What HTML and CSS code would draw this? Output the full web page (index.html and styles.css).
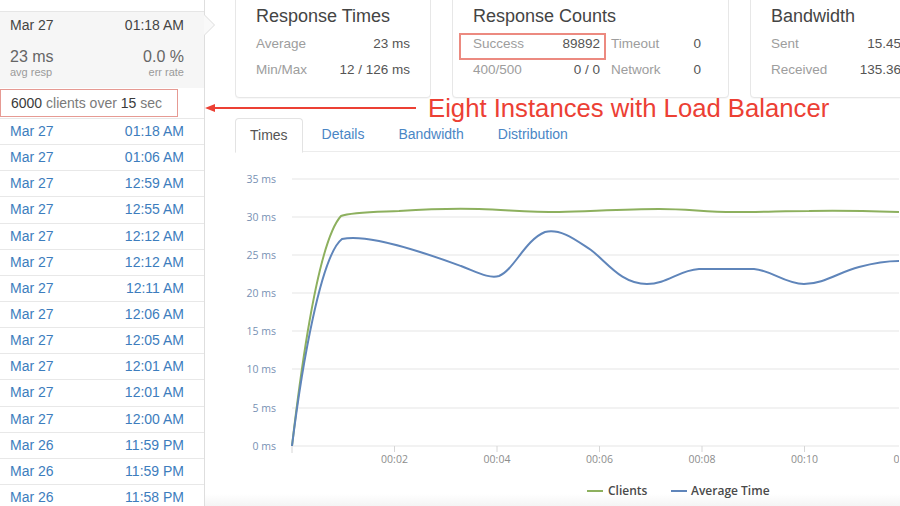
FILE: index.html
```html
<!DOCTYPE html>
<html>
<head>
<meta charset="utf-8">
<link rel="stylesheet" href="styles.css">
</head>
<body>
<div class="app">
  <aside class="sidebar">
    <div class="top-strip"></div>
    <div class="selected">
      <div class="row-line"><span>Mar 27</span><span>01:18 AM</span></div>
      <div class="stats">
        <div class="stat"><div class="big">23 ms</div><div class="small">avg resp</div></div>
        <div class="stat right"><div class="big">0.0 %</div><div class="small">err rate</div></div>
      </div>
    </div>
    <div class="clients"><b>6000</b> clients over <b>15</b> sec</div>
    <ul class="runs">
      <li><span>Mar 27</span><span>01:18 AM</span></li>
      <li><span>Mar 27</span><span>01:06 AM</span></li>
      <li><span>Mar 27</span><span>12:59 AM</span></li>
      <li><span>Mar 27</span><span>12:55 AM</span></li>
      <li><span>Mar 27</span><span>12:12 AM</span></li>
      <li><span>Mar 27</span><span>12:12 AM</span></li>
      <li><span>Mar 27</span><span>12:11 AM</span></li>
      <li><span>Mar 27</span><span>12:06 AM</span></li>
      <li><span>Mar 27</span><span>12:05 AM</span></li>
      <li><span>Mar 27</span><span>12:01 AM</span></li>
      <li><span>Mar 27</span><span>12:01 AM</span></li>
      <li><span>Mar 27</span><span>12:00 AM</span></li>
      <li><span>Mar 26</span><span>11:59 PM</span></li>
      <li><span>Mar 26</span><span>11:59 PM</span></li>
      <li><span>Mar 26</span><span>11:58 PM</span></li>
    </ul>
  </aside>

  <main class="main">
    <div class="cards">
      <section class="card card-times">
        <h2>Response Times</h2>
        <div class="kv"><span class="k">Average</span><span class="v">23 ms</span></div>
        <div class="kv"><span class="k">Min/Max</span><span class="v">12 / 126 ms</span></div>
      </section>
      <section class="card card-counts">
        <h2>Response Counts</h2>
        <div class="grid2">
          <div class="kv"><span class="k">Success</span><span class="v">89892</span></div>
          <div class="kv"><span class="k">Timeout</span><span class="v">0</span></div>
          <div class="kv"><span class="k">400/500</span><span class="v">0 / 0</span></div>
          <div class="kv"><span class="k">Network</span><span class="v">0</span></div>
        </div>
        <div class="mark-box"></div>
      </section>
      <section class="card card-bw">
        <h2>Bandwidth</h2>
        <div class="kv"><span class="k">Sent</span><span class="v">15.45 MB</span></div>
        <div class="kv"><span class="k">Received</span><span class="v">135.36 MB</span></div>
      </section>
    </div>

    <nav class="tabs">
      <span class="tab active">Times</span>
      <span class="tab">Details</span>
      <span class="tab">Bandwidth</span>
      <span class="tab">Distribution</span>
    </nav>

    <div class="chart">
      <svg class="chart-svg" width="694" height="354" viewBox="206 152 694 354">
        <g class="grid">
          <line x1="293" y1="179" x2="900" y2="179"/>
          <line x1="293" y1="217" x2="900" y2="217"/>
          <line x1="293" y1="255" x2="900" y2="255"/>
          <line x1="293" y1="293" x2="900" y2="293"/>
          <line x1="293" y1="331" x2="900" y2="331"/>
          <line x1="293" y1="369" x2="900" y2="369"/>
          <line x1="293" y1="408" x2="900" y2="408"/>
          <line x1="293" y1="446" x2="900" y2="446"/>
        </g>
        <g class="ticks">
          <line x1="293" y1="443" x2="293" y2="453"/>
          <line x1="395.5" y1="446" x2="395.5" y2="452"/>
          <line x1="498" y1="446" x2="498" y2="452"/>
          <line x1="600.5" y1="446" x2="600.5" y2="452"/>
          <line x1="703" y1="446" x2="703" y2="452"/>
          <line x1="805.5" y1="446" x2="805.5" y2="452"/>
        </g>
        <g class="ylabels">
          <text x="277" y="182.5">35 ms</text>
          <text x="277" y="220.5">30 ms</text>
          <text x="277" y="258.5">25 ms</text>
          <text x="277" y="296.5">20 ms</text>
          <text x="277" y="334.5">15 ms</text>
          <text x="277" y="372.5">10 ms</text>
          <text x="277" y="411.5">5 ms</text>
          <text x="277" y="449.5">0 ms</text>
        </g>
        <g class="xlabels">
          <text x="395.5" y="463">00:02</text>
          <text x="498" y="463">00:04</text>
          <text x="600.5" y="463">00:06</text>
          <text x="703" y="463">00:08</text>
          <text x="805.5" y="463">00:10</text>
          <text x="908" y="463">00:12</text>
        </g>
        <path class="line-clients" d="M293,446 C303,360 320,240 342,216 C352,212 375,212 400,211 C430,209 450,208 480,209 C510,210 530,212 560,212 C595,211 630,209 660,209 C690,209 705,212 735,212 C765,212 785,211 810,211 C840,210 870,211 900,212"/>
        <path class="line-avg" d="M293,446 C303,365 322,255 343,239 C352,237 365,238 380,241 C410,247 440,258 462,266 C478,272 490,279 500,276 C515,270 526,240 546,232 C562,228 578,241 592,250 C608,262 622,284 648,284 C668,284 680,270 700,269 L755,269 C772,270 786,284 805,284 C825,284 840,272 860,267 C875,263 890,261 900,261"/>
        <g class="legend">
          <line class="lg-green" x1="588" y1="491" x2="604" y2="491"/>
          <text x="609" y="495">Clients</text>
          <line class="lg-blue" x1="672" y1="491" x2="688" y2="491"/>
          <text x="692" y="495">Average Time</text>
        </g>
      </svg>
    </div>
  </main>

  <div class="annotation">
    <svg class="arrow" width="215" height="12" viewBox="0 0 215 12">
      <line x1="6" y1="6" x2="212" y2="6"/>
      <polygon points="1,6 11,2 11,10"/>
    </svg>
    <span class="note">Eight Instances with Load Balancer</span>
  </div>
</div>
</body>
</html>
```

FILE: styles.css
```css
* { box-sizing: border-box; }
html, body {
  margin: 0;
  padding: 0;
  width: 900px;
  height: 506px;
  overflow: hidden;
  background: #fff;
  font-family: "Liberation Sans", Arial, sans-serif;
}
.app {
  position: relative;
  display: flex;
  width: 900px;
  height: 506px;
}

/* Sidebar */
.sidebar {
  width: 205px;
  flex: none;
  border-right: 1px solid #dedede;
  background: #fff;
}
.top-strip {
  height: 12px;
  border-bottom: 1px solid #e6e6e6;
}
.selected {
  position: relative;
  background: #f6f6f6;
  height: 76px;
  padding: 0 20px 0 10px;
  color: #444;
}
.selected::before,
.selected::after {
  content: "";
  position: absolute;
  top: 3px;
  width: 0;
  height: 0;
  border-top: 10px solid transparent;
  border-bottom: 10px solid transparent;
}
.selected::before {
  right: -11px;
  border-left: 10px solid #dcdcdc;
}
.selected::after {
  right: -10px;
  border-left: 10px solid #f9f9f9;
}
.row-line {
  display: flex;
  justify-content: space-between;
  height: 25px;
  line-height: 26px;
  font-size: 14px;
}
.stats {
  display: flex;
  justify-content: space-between;
  margin-top: 11px;
}
.stat.right { text-align: right; }
.big {
  font-size: 16px;
  line-height: 18px;
  color: #666;
}
.small {
  font-size: 11px;
  line-height: 12px;
  color: #9a9a9a;
}
.clients {
  width: 178px;
  height: 28px;
  margin-top: 1px;
  border: 1px solid #e69a93;
  padding-left: 10px;
  font-size: 14px;
  line-height: 26px;
  color: #7a7a7a;
}
.clients b {
  font-weight: normal;
  color: #3a3a3a;
}
.runs {
  list-style: none;
  margin: 1px 0 0;
  padding: 0;
  border-top: 1px solid #e8e8e8;
}
.runs li {
  display: flex;
  justify-content: space-between;
  height: 26.15px;
  padding: 0 20px 0 10px;
  border-bottom: 1px solid #e8e8e8;
  font-size: 14px;
  line-height: 25px;
  color: #3d7dbd;
}

/* Main */
.main {
  width: 695px;
  flex: none;
  background: #fff;
  overflow: hidden;
}
.cards {
  display: flex;
  gap: 21px;
  margin: -12px 0 0 30px;
  width: 760px;
}
.card {
  flex: none;
  background: #fff;
  border: 1px solid #e7e7e7;
  border-radius: 4px;
  box-shadow: 0 1px 1px rgba(0,0,0,0.03);
  padding: 16px 20px 14px;
  position: relative;
}
.card h2 {
  margin: 0 0 4px;
  font-size: 18px;
  font-weight: normal;
  line-height: 22px;
  color: #444;
}
.card-times { width: 196px; }
.card-counts { width: 277px; padding-right: 29px; }
.card-bw { width: 196px; }
.kv {
  display: flex;
  justify-content: space-between;
  height: 26px;
  line-height: 26px;
  font-size: 13.5px;
}
.k { color: #9d9d9d; }
.v { color: #555; }
.grid2 {
  display: grid;
  grid-template-columns: 127px 90px;
  column-gap: 11px;
}
.mark-box {
  position: absolute;
  left: 6px;
  top: 44px;
  width: 147px;
  height: 27px;
  border: 2px solid #ec8a80;
}

/* Tabs */
.tabs {
  display: flex;
  gap: 4px;
  margin: 20px 0 0 30px;
  height: 34px;
  border-bottom: 1px solid #ececec;
}
.tab {
  padding: 0 15px;
  font-size: 14px;
  line-height: 33px;
  color: #4a86c5;
}
.tab.active {
  color: #555;
  background: #fff;
  border: 1px solid #e3e3e3;
  border-bottom-color: #fff;
  border-radius: 4px 4px 0 0;
  height: 35px;
  padding: 0 14px;
}
.chart {
  height: 354px;
  background: linear-gradient(to bottom, #fff 0, #fff 342px, #f4f4f4 354px);
}
.chart-svg { display: block; }
.grid line { stroke: #e5e5e5; stroke-width: 1; }
.ticks line { stroke: #d6d6d6; stroke-width: 1; }
.ylabels text {
  font-family: "Open Sans", sans-serif;
  font-size: 10.5px;
  fill: #7891b4;
  text-anchor: end;
}
.xlabels text {
  font-family: "Open Sans", sans-serif;
  font-size: 10.5px;
  fill: #8d8d8d;
  text-anchor: middle;
}
.line-clients {
  fill: none;
  stroke: #8db05e;
  stroke-width: 2;
}
.line-avg {
  fill: none;
  stroke: #5f85ba;
  stroke-width: 2;
}
.legend text {
  font-family: "Open Sans", sans-serif;
  font-size: 12px;
  font-weight: 600;
  fill: #4a4a4a;
}
.lg-green { stroke: #8db05e; stroke-width: 2; }
.lg-blue { stroke: #5f85ba; stroke-width: 2; }

/* Annotation overlay */
.annotation {
  position: absolute;
  left: 204px;
  top: 92px;
  display: flex;
  align-items: center;
  gap: 9px;
}
.arrow line { stroke: #ec4034; stroke-width: 2; }
.arrow polygon { fill: #ec4034; }
.note {
  font-size: 25.7px;
  line-height: 30px;
  color: #ec4034;
  margin-top: 1px;
}
```
